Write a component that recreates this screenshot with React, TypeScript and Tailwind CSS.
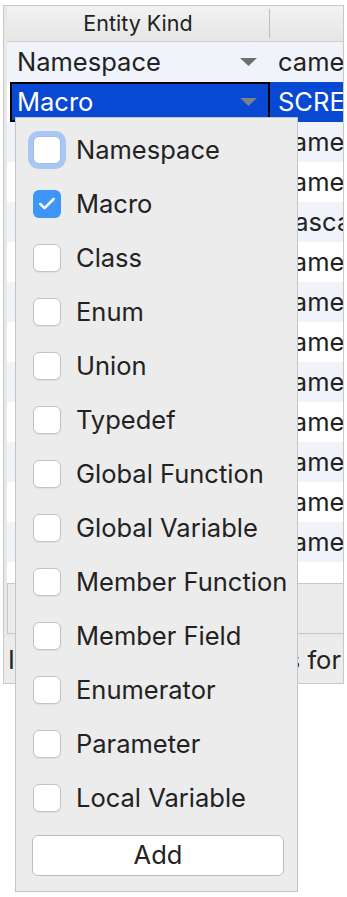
import { Check } from 'lucide-react';

type Rule = {
  kind: string;
  style: string;
};

// only the first two entity kinds are visible, the rest sit under the popup
const rules: Rule[] = [
  { kind: 'Namespace', style: 'camelCase' },
  { kind: 'Macro', style: 'SCREAMING_SNAKE_CASE' },
  { kind: '', style: 'camelCase' },
  { kind: '', style: 'camelCase' },
  { kind: '', style: 'PascalCase' },
  { kind: '', style: 'camelCase' },
  { kind: '', style: 'camelCase' },
  { kind: '', style: 'camelCase' },
  { kind: '', style: 'camelCase' },
  { kind: '', style: 'camelCase' },
  { kind: '', style: 'camelCase' },
  { kind: '', style: 'camelCase' },
  { kind: '', style: 'camelCase' },
];

const kinds = [
  'Namespace',
  'Macro',
  'Class',
  'Enum',
  'Union',
  'Typedef',
  'Global Function',
  'Global Variable',
  'Member Function',
  'Member Field',
  'Enumerator',
  'Parameter',
  'Local Variable',
];

function Triangle({ color }: { color: string }) {
  return (
    <svg width="17" height="8" viewBox="0 0 17 8" className="shrink-0">
      <path d="M0 0 H17 L8.5 8 Z" fill={color} />
    </svg>
  );
}

function CheckBox({ checked, focused }: { checked?: boolean; focused?: boolean }) {
  if (checked) {
    return (
      <div className="w-[28px] h-[28px] rounded-[6px] bg-[#3d95f7] flex items-center justify-center shrink-0">
        <Check className="w-[20px] h-[20px] text-white" strokeWidth={3} />
      </div>
    );
  }
  return (
    <div
      className={`w-[28px] h-[28px] rounded-[6px] bg-white border shrink-0 ${
        focused
          ? 'border-[#9dbcf2] shadow-[0_0_0_5px_#a9c6f4]'
          : 'border-[#c2c2c2] shadow-[0_1px_1px_rgba(0,0,0,0.06)]'
      }`}
    />
  );
}

export default function App() {
  return (
    <div className="relative w-[347px] h-[897px] bg-white text-[#222] font-['Inter',sans-serif] overflow-hidden">
      {/* Table panel */}
      <div className="ml-[3px] mt-[5px] w-[341px] h-[679px] border border-[#c8c8c8] bg-[#ececec] flex flex-col">
        <div className="flex-1 flex flex-col pl-[3px] bg-[#e8e8e8]">
          {/* Header */}
          <div className="h-[36px] flex border-b border-[#d0d0d0] bg-linear-to-b from-[#f2f2f2] to-[#e6e6e6] shrink-0">
            <div className="w-[262px] flex items-center justify-center text-[21.5px]">Entity Kind</div>
            <div className="w-px my-[3px] bg-[#bdbdbd]" />
            <div className="flex-1" />
          </div>

          {/* Rows */}
          <div className="h-[541px] bg-white flex flex-col overflow-hidden">
            {rules.map((rule, i) => {
              const selected = i === 1;
              const stripe = i % 2 === 0 ? 'bg-[#f0f4fa]' : 'bg-white';
              return (
                <div key={i} className={`h-[40px] flex shrink-0 text-[25.5px] ${stripe}`}>
                  <div className="w-[263px] shrink-0 flex">
                    {selected ? (
                      <div className="ml-[3px] flex-1 border-2 border-black bg-[#0848d3] flex items-center pl-[5px] pr-[11px] text-white">
                        <span className="flex-1 whitespace-nowrap">{rule.kind}</span>
                        <Triangle color="#7c7f8c" />
                      </div>
                    ) : (
                      <div className="flex-1 flex items-center pl-[10px] pr-[13px]">
                        <span className="flex-1 whitespace-nowrap">{rule.kind}</span>
                        {i === 0 && <Triangle color="#6f6f6f" />}
                      </div>
                    )}
                  </div>
                  <div
                    className={`flex-1 flex items-center pl-[8px] whitespace-nowrap overflow-hidden ${
                      selected ? 'bg-[#0848d3] text-white' : ''
                    }`}
                  >
                    {rule.style}
                  </div>
                </div>
              );
            })}
          </div>

          {/* Scroll area */}
          <div className="h-[51px] border-t border-b border-l border-[#c8c8c8] bg-[#ebebeb] shrink-0" />
        </div>

        {/* Status line */}
        <div className="h-[46px] flex items-center pl-[4px] text-[25.5px] whitespace-nowrap overflow-hidden shrink-0">
          Items use these settings for names
        </div>
      </div>

      {/* Dropdown popup */}
      <div className="absolute left-[15px] top-[117px] w-[283px] h-[775px] border border-[#c4c4c4] bg-[#ececec] pt-[5px] flex flex-col">
        {kinds.map((kind, i) => (
          <div key={kind} className="h-[54px] flex items-center pl-[17px] shrink-0">
            <CheckBox checked={i === 1} focused={i === 0} />
            <span className="ml-[15px] text-[25.5px] whitespace-nowrap">{kind}</span>
          </div>
        ))}
        <button className="mt-[10px] ml-[16px] w-[252px] h-[41px] rounded-[6px] bg-white border border-[#bdbdbd] text-[25.5px] flex items-center justify-center">
          Add
        </button>
      </div>
    </div>
  );
}
